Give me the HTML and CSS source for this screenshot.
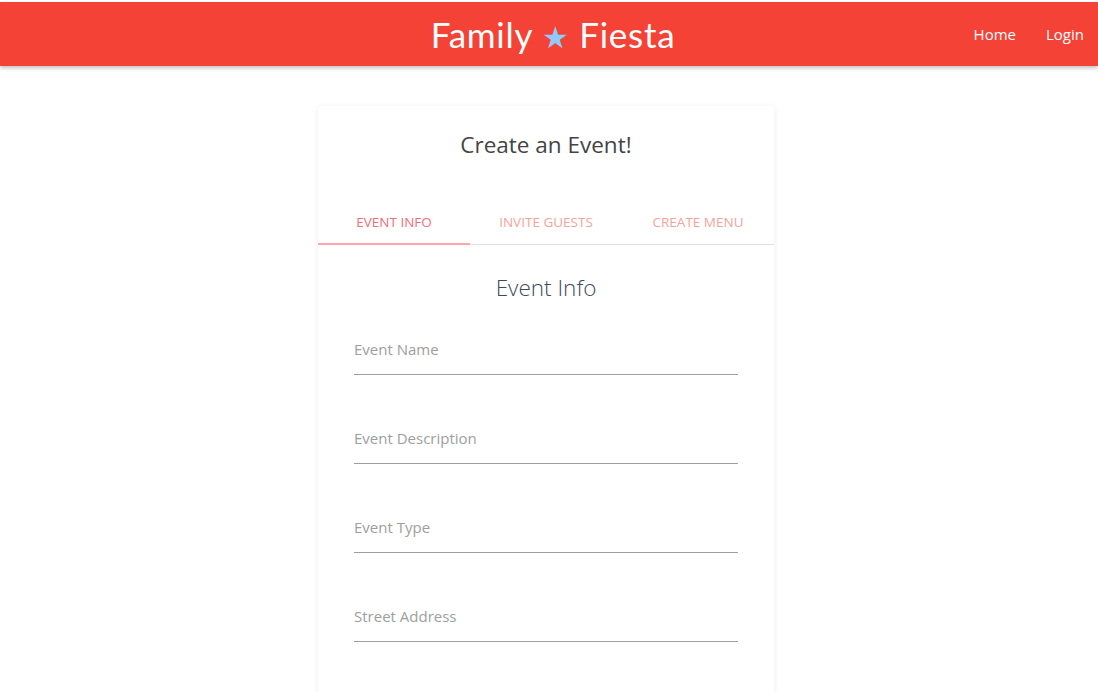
FILE: index.html
```html
<!DOCTYPE html>
<html>
<head>
<meta charset="utf-8">
<link rel="stylesheet" href="styles.css">
</head>
<body>
<header class="topbar">
  <div class="brand">Family <span class="star">★</span> Fiesta</div>
  <nav class="nav">
    <a class="nav-link">Home</a>
    <a class="nav-link">Login</a>
  </nav>
</header>
<main class="main">
  <section class="card">
    <h1 class="card-title">Create an Event!</h1>
    <div class="tabs">
      <div class="tab active">Event Info</div>
      <div class="tab">Invite Guests</div>
      <div class="tab">Create Menu</div>
    </div>
    <form class="form">
      <h2 class="form-title">Event Info</h2>
      <div class="field"><span class="label">Event Name</span></div>
      <div class="field"><span class="label">Event Description</span></div>
      <div class="field"><span class="label">Event Type</span></div>
      <div class="field"><span class="label">Street Address</span></div>
    </form>
  </section>
</main>
</body>
</html>
```
FILE: styles.css
```css
* { box-sizing: border-box; }
html, body { margin: 0; padding: 0; background: #fff; overflow: hidden; height: 692px; }
body { font-family: "Open Sans", "Noto Sans", sans-serif; padding-top: 2px; }
.topbar {
  height: 64px;
  background: #f44336;
  display: flex;
  align-items: center;
  justify-content: center;
  position: relative;
  box-shadow: 0 2px 4px rgba(0,0,0,0.25);
  z-index: 2;
}
.brand {
  font-family: "Lato", sans-serif;
  color: #fff;
  font-size: 35px;
  letter-spacing: 0.7px;
  margin-left: 8px;
}
.star { color: #90caf9; font-size: 30px; }
.nav {
  position: absolute;
  right: 14px;
  top: 0;
  height: 64px;
  display: flex;
  align-items: center;
  gap: 30px;
}
.nav-link { color: #fff; font-size: 15px; }
.main { display: flex; justify-content: center; padding-top: 40px; padding-right: 6px; height: 626px; overflow: hidden; }
.card {
  width: 456px;
  height: 640px;
  flex-shrink: 0;
  background: #fff;
  border-radius: 4px;
  box-shadow: 0 1px 6px rgba(0,0,0,0.08);
}
.card-title {
  margin: 0;
  padding-top: 23px;
  height: 91px;
  text-align: center;
  font-weight: 400;
  font-size: 22.5px;
  color: #444;
}
.tabs {
  display: flex;
  height: 48px;
  border-bottom: 1px solid #e0e0e0;
}
.tab {
  flex: 1;
  display: flex;
  align-items: center;
  justify-content: center;
  padding-top: 2px;
  text-transform: uppercase;
  font-size: 13.5px;
  color: #f4a39a;
}
.tab.active { color: #f06d7d; border-bottom: 2px solid #f7a8ad; margin-bottom: -1px; padding-top: 4px; }
.form { padding: 27px 36px 0; }
.form-title {
  margin: 0 0 19px;
  text-align: center;
  font-weight: 300;
  font-size: 22.5px;
  color: #3d4a5c;
}
.field {
  height: 53px;
  border-bottom: 1px solid #9e9e9e;
  margin-bottom: 36px;
  padding-top: 16px;
}
.label { font-size: 15px; color: #9e9e9e; }
```
